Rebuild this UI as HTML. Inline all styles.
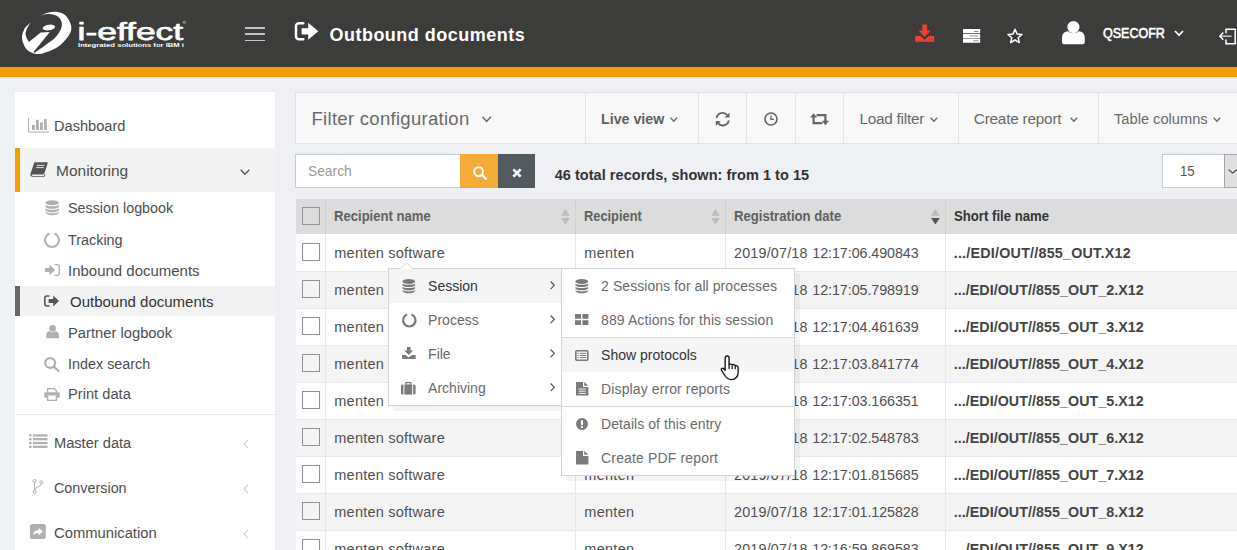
<!DOCTYPE html>
<html lang="en">
<head>
<meta charset="utf-8">
<title>Outbound documents</title>
<style>
*{box-sizing:border-box;margin:0;padding:0}
html,body{width:1237px;height:550px;overflow:hidden}
body{background:#eff0f4;font-family:"Liberation Sans",sans-serif;color:#333;position:relative;font-size:14px}
.abs{position:absolute}
svg{position:absolute;overflow:visible}
.t{position:absolute;white-space:nowrap;line-height:20px;height:20px}
#hdr{left:0;top:0;width:1237px;height:67px;background:#3c3c3b}
#obar{left:0;top:67px;width:1237px;height:10px;background:#f59c00}
#side{left:15px;top:92px;width:260px;height:470px;background:#fff}
#fbar{left:295px;top:92px;width:960px;height:52px;background:#f8f8f9;border:1px solid #e2e3e8}
.vd{position:absolute;top:93px;width:1px;height:50px;background:#e2e3e8}
.th{position:absolute;top:199px;height:35px;background:#dcdcdc}
.row{position:absolute;left:296px;width:960px;height:37px;border-top:1px solid #e6e7ec}
.row.f{border-top:none}
.row.o{background:#fff}.row.e{background:#f4f4f5}
.cd{position:absolute;top:0;width:1px;height:37px;background:#e6e7ec}
.cb{position:absolute;left:6px;top:8px;width:18px;height:18px;border:1px solid #929292}
.menu{position:absolute;background:#fff;border:1px solid #d4d4d4;box-shadow:5px 5px 0 rgba(0,0,0,.045)}
.hl{position:absolute;background:#f5f5f5}
</style>
</head>
<body>
<div id="hdr" class="abs"></div>
<div id="obar" class="abs"></div>

<svg style="left:0;top:0" width="200" height="67" viewBox="0 0 200 67">
  <path d="M40.7 15.5 C41.9 15.0 45.4 13.3 48.0 12.7 C50.6 12.1 53.3 11.4 56.2 11.8 C59.1 12.2 62.8 12.9 65.3 15.3 C67.8 17.7 70.6 22.8 71.2 26.2 C71.8 29.5 71.0 31.9 68.9 35.3 C66.9 38.6 62.8 43.3 58.9 46.2 C55.0 49.1 49.1 51.3 45.3 52.5 C41.5 53.8 39.2 54.4 36.2 53.9 C33.2 53.5 29.4 52.3 27.1 49.8 C24.7 47.3 22.5 42.4 22.1 38.9 C21.6 35.4 22.9 31.7 24.4 28.9 C25.8 26.2 29.7 23.5 30.7 22.4 C30.0 23.5 27.5 27.2 26.6 29.4 C25.8 31.5 25.3 33.2 25.7 35.3 C26.1 37.4 28.4 41.0 28.9 42.1 L40.7 32.5 L49.8 32.1 L33.6 52.0 L34.5 52.9 C36.5 51.5 42.9 47.0 46.2 44.5 C49.5 42.1 52.2 40.5 54.4 38.5 C56.6 36.4 58.1 34.2 59.4 32.1 C60.6 30.0 61.6 27.8 61.8 25.7 C62.0 23.6 61.7 21.1 60.5 19.4 C59.4 17.6 57.1 16.0 54.8 15.1 C52.6 14.2 49.4 13.8 47.1 13.9 C44.7 14.0 41.8 15.2 40.7 15.5 Z" fill="#fff"/>
  <ellipse cx="48.9" cy="27.5" rx="6.3" ry="2.8" transform="rotate(-8 48.9 27.5)" fill="#fff"/>
  <text x="77.6" y="39.7" font-family="Liberation Sans, sans-serif" font-size="24.8" fill="#fff" stroke="#fff" stroke-width="0.75" stroke-linejoin="round" textLength="105.5" lengthAdjust="spacingAndGlyphs">i-effect</text>
  <text x="78" y="46.9" font-family="Liberation Sans, sans-serif" font-weight="bold" font-size="5.2" fill="#fff" textLength="106" lengthAdjust="spacingAndGlyphs">Integrated solutions for IBM i</text>
  <circle cx="184.3" cy="22.3" r="1.1" fill="none" stroke="#fff" stroke-width="0.5"/>
</svg>

<div class="abs" style="left:245px;top:26.8px;width:20px;height:1.9px;background:#c4c4c4"></div>
<div class="abs" style="left:245px;top:33.2px;width:20px;height:1.9px;background:#c4c4c4"></div>
<div class="abs" style="left:245px;top:39.6px;width:20px;height:1.9px;background:#c4c4c4"></div>
<svg style="left:294px;top:21px" width="25" height="21" viewBox="0 0 25 21">
  <path d="M9.3 2.3 H5 A3 3 0 0 0 2 5.3 V15.3 A3 3 0 0 0 5 18.3 H9.3" fill="none" stroke="#fff" stroke-width="2.5" stroke-linecap="round"/>
  <path d="M7.6 7.2 H14.2 V1.8 L24.3 10.3 L14.2 18.8 V13.4 H7.6 Z" fill="#fff"/>
</svg>
<div class="t" style="left:329.4px;top:24.6px;font-size:18px;color:#fff;letter-spacing:0.50px;font-weight:bold;">Outbound documents</div>
<svg style="left:915px;top:24px" width="19.2" height="18" viewBox="0 0 19.2 18">
  <path d="M7.3 0.6 H12.1 V6.5 H15.8 L9.7 13 L3.6 6.5 H7.3 Z" fill="#ee4136"/>
  <path d="M0.2 12 H5.6 L9.7 16 L13.8 12 H19.1 V17.8 H0.2 Z" fill="#ee4136"/>
  <rect x="13.3" y="14.8" width="1.5" height="1.4" fill="#c5342b"/><rect x="16" y="14.8" width="1.5" height="1.4" fill="#c5342b"/>
</svg>
<svg style="left:962.6px;top:28.6px" width="17.2" height="13.8" viewBox="0 0 17.2 13.8">
  <rect x="0" y="0" width="17.2" height="4.3" rx="0.6" fill="#fff"/>
  <rect x="0" y="4.9" width="17.2" height="4.1" rx="0.6" fill="#fff"/>
  <rect x="0" y="9.6" width="17.2" height="4.2" rx="0.6" fill="#fff"/>
  <rect x="11" y="2" width="4.6" height="0.9" fill="#8a8a8a"/><rect x="6.5" y="6.5" width="9" height="0.9" fill="#8a8a8a"/><rect x="10" y="11.3" width="5.6" height="0.9" fill="#8a8a8a"/>
</svg>
<svg style="left:1007px;top:28px" width="16" height="16" viewBox="0 0 16 16">
  <path d="M8 1.3 L10 5.9 L15 6.4 L11.2 9.7 L12.3 14.6 L8 12 L3.7 14.6 L4.8 9.7 L1 6.4 L6 5.9 Z" fill="none" stroke="#fff" stroke-width="1.5" stroke-linejoin="round"/>
</svg>
<svg style="left:1062px;top:20.8px" width="23" height="23.4" viewBox="0 0 23 23.4">
  <circle cx="11.4" cy="6.1" r="6.1" fill="#fff"/>
  <path d="M0 20.4 V17 C0 12.6 2.6 10.6 6 10.3 C8.4 12.8 14.4 12.8 16.8 10.3 C20.2 10.6 22.8 12.6 22.8 17 V20.4 Q22.8 23.3 19.8 23.3 H3 Q0 23.3 0 20.4 Z" fill="#fff"/>
</svg>
<div class="t" style="left:1103.4px;top:23.3px;font-size:14px;color:#fff;letter-spacing:0.00px;transform:scaleX(0.8941);transform-origin:0 0;-webkit-text-stroke:0.55px #fff;">QSECOFR</div>
<svg style="left:1174px;top:30px" width="10" height="7" viewBox="0 0 10 7"><path d="M1 1 L5 5.2 L9 1" fill="none" stroke="#fff" stroke-width="1.7"/></svg>
<svg style="left:1218.5px;top:27.6px" width="18" height="17" viewBox="0 0 18 17">
  <path d="M7 5.2 V1.2 H16.2 V15.8 H7 V11.4" fill="none" stroke="#fff" stroke-width="1.5"/>
  <path d="M1.5 8.2 H12.5" fill="none" stroke="#d0d0d0" stroke-width="1.4"/>
  <path d="M4.3 4.6 L0.9 8.2 L4.3 11.8" fill="none" stroke="#fff" stroke-width="1.5"/>
</svg>
<div id="side" class="abs"></div>
<div class="abs" style="left:15px;top:148px;width:260px;height:44px;background:#f3f3f4"></div>
<div class="abs" style="left:15px;top:148px;width:5px;height:44px;background:#f59c00"></div>
<div class="abs" style="left:15px;top:286px;width:260px;height:30px;background:#f3f3f4"></div>
<div class="abs" style="left:15px;top:286px;width:5px;height:30px;background:#666"></div>
<div class="abs" style="left:15px;top:414px;width:260px;height:1px;background:#e9e9ec"></div>

<div class="t" style="left:54.4px;top:115.6px;font-size:15.5px;color:#4d4d4d;letter-spacing:0.00px;transform:scaleX(0.9429);transform-origin:0 0;">Dashboard</div>
<div class="t" style="left:56.1px;top:160.9px;font-size:15.5px;color:#4d4d4d;letter-spacing:-0.04px;">Monitoring</div>
<div class="t" style="left:68.1px;top:198.4px;font-size:15.5px;color:#4d4d4d;letter-spacing:0.00px;transform:scaleX(0.9249);transform-origin:0 0;">Session logbook</div>
<div class="t" style="left:68.1px;top:229.6px;font-size:15.5px;color:#4d4d4d;letter-spacing:0.00px;transform:scaleX(0.9276);transform-origin:0 0;">Tracking</div>
<div class="t" style="left:68.1px;top:260.6px;font-size:15.5px;color:#4d4d4d;letter-spacing:0.00px;transform:scaleX(0.9665);transform-origin:0 0;">Inbound documents</div>
<div class="t" style="left:70.3px;top:291.9px;font-size:15.5px;color:#333;letter-spacing:0.00px;transform:scaleX(0.9675);transform-origin:0 0;">Outbound documents</div>
<div class="t" style="left:68.1px;top:322.5px;font-size:15.5px;color:#4d4d4d;letter-spacing:0.00px;transform:scaleX(0.9513);transform-origin:0 0;">Partner logbook</div>
<div class="t" style="left:68.1px;top:353.5px;font-size:15.5px;color:#4d4d4d;letter-spacing:0.00px;transform:scaleX(0.9274);transform-origin:0 0;">Index search</div>
<div class="t" style="left:68.1px;top:384.2px;font-size:15.5px;color:#4d4d4d;letter-spacing:0.00px;transform:scaleX(0.9466);transform-origin:0 0;">Print data</div>
<div class="t" style="left:54.4px;top:432.5px;font-size:15.5px;color:#4d4d4d;letter-spacing:0.00px;transform:scaleX(0.9433);transform-origin:0 0;">Master data</div>
<div class="t" style="left:54.4px;top:478.0px;font-size:15.5px;color:#4d4d4d;letter-spacing:0.00px;transform:scaleX(0.9260);transform-origin:0 0;">Conversion</div>
<div class="t" style="left:54.4px;top:522.6px;font-size:15.5px;color:#4d4d4d;letter-spacing:0.00px;transform:scaleX(0.9537);transform-origin:0 0;">Communication</div>
<svg style="left:27.5px;top:117.5px" width="21" height="15" viewBox="0 0 21 15">
 <path d="M0.5 0 V14 H21" fill="none" stroke="#b0b0b0" stroke-width="1"/>
 <rect x="4" y="7" width="2.8" height="5" fill="#b0b0b0"/><rect x="8" y="1.8" width="2.8" height="10.2" fill="#b0b0b0"/><rect x="12" y="4.4" width="2.8" height="7.6" fill="#b0b0b0"/><rect x="16" y="1" width="2.8" height="11" fill="#b0b0b0"/>
</svg>
<svg style="left:29.5px;top:162px" width="18" height="15" viewBox="0 0 18 15">
 <path d="M5.2 0.3 H17.2 Q18 0.3 17.7 1.2 L14.4 11.6 Q14.1 12.4 13.2 12.4 H2.6 Q1.4 12.4 1.6 13.2 Q1.8 13.9 3 13.9 H13.8 L14.6 12.2 L15.5 12.6 L14.6 14.8 H2.4 Q0.2 14.8 0.3 12.6 Q0.3 11.8 0.8 10.8 L4 1.2 Q4.3 0.3 5.2 0.3 Z" fill="#555"/>
 <path d="M6.8 3.4 H14.4 M6.2 5.6 H13.8" stroke="#f3f3f4" stroke-width="0.9"/>
</svg>
<svg style="left:239.5px;top:168.5px" width="10" height="7" viewBox="0 0 10 7"><path d="M0.7 0.8 L5 5.3 L9.3 0.8" fill="none" stroke="#555" stroke-width="1.3"/></svg>
<svg style="left:243px;top:439px" width="6" height="10" viewBox="0 0 6 10"><path d="M5.3 0.6 L1 5 L5.3 9.4" fill="none" stroke="#cfcfcf" stroke-width="1.1"/></svg>
<svg style="left:243px;top:484px" width="6" height="10" viewBox="0 0 6 10"><path d="M5.3 0.6 L1 5 L5.3 9.4" fill="none" stroke="#cfcfcf" stroke-width="1.1"/></svg>
<svg style="left:243px;top:529px" width="6" height="10" viewBox="0 0 6 10"><path d="M5.3 0.6 L1 5 L5.3 9.4" fill="none" stroke="#cfcfcf" stroke-width="1.1"/></svg>
<svg style="left:44.9px;top:200.2px" width="14.4" height="15.6" viewBox="0 0 14 15">
 <ellipse cx="7" cy="2.6" rx="6.6" ry="2.5" fill="#b0b0b0"/>
 <path d="M0.4 4.6 C2 6.6 12 6.6 13.6 4.6 V6.4 C12 9 2 9 0.4 6.4 Z" fill="#b0b0b0"/>
 <path d="M0.4 8 C2 10 12 10 13.6 8 V9.8 C12 12.4 2 12.4 0.4 9.8 Z" fill="#b0b0b0"/>
 <path d="M0.4 11.4 C2 13.4 12 13.4 13.6 11.4 V12.4 C12 15.6 2 15.6 0.4 12.4 Z" fill="#b0b0b0"/>
</svg>
<svg style="left:44px;top:231.5px" width="16" height="16" viewBox="0 0 16 16"><path d="M10.38 1.47 A6.95 6.95 0 1 1 5.62 1.47" fill="none" stroke="#b4b4b4" stroke-width="2.1"/></svg>
<svg style="left:44.8px;top:264.2px" width="15" height="12" viewBox="0 0 15 12">
 <path d="M0 4 H4.5 V0.8 L10 6 L4.5 11.2 V8 H0 Z" fill="#b0b0b0"/>
 <path d="M9.5 0.7 H12.3 A2 2 0 0 1 14.3 2.7 V9.3 A2 2 0 0 1 12.3 11.3 H9.5" fill="none" stroke="#b0b0b0" stroke-width="1.3"/>
</svg>
<svg style="left:44.4px;top:295px" width="15" height="12" viewBox="0 0 15 12">
 <path d="M5.5 1 H3 A2.2 2.2 0 0 0 0.8 3.2 V8.8 A2.2 2.2 0 0 0 3 11 H5.5" fill="none" stroke="#555" stroke-width="1.6"/>
 <path d="M4.6 4 H9.2 V0.6 L15 6 L9.2 11.4 V8 H4.6 Z" fill="#555"/>
</svg>
<svg style="left:45.5px;top:325.2px" width="13.2" height="13.4" viewBox="0 0 13 13.4">
 <circle cx="6.5" cy="3.4" r="3.3" fill="#b0b0b0"/>
 <path d="M0.2 13.2 V9.8 C0.2 7.4 2 6.3 3.6 6.2 C4.8 7.6 8.2 7.6 9.4 6.2 C11 6.3 12.8 7.4 12.8 9.8 V13.2 Z" fill="#b0b0b0"/>
</svg>
<svg style="left:44.3px;top:357.3px" width="16" height="15" viewBox="0 0 16 15">
 <circle cx="6.2" cy="6" r="4.9" fill="none" stroke="#b0b0b0" stroke-width="2.2"/>
 <path d="M9.8 9.6 L14.6 14" stroke="#b0b0b0" stroke-width="2.2" stroke-linecap="round"/>
</svg>
<svg style="left:44.3px;top:388px" width="16" height="13" viewBox="0 0 16 13">
 <path d="M3.6 4.4 V0.7 H10.4 L12.4 2.7 V4.4" fill="none" stroke="#b0b0b0" stroke-width="1.3"/>
 <path d="M1.6 4.2 H14.4 Q15.8 4.2 15.8 5.6 V9.6 H12.6 V7.6 H3.4 V9.6 H0.2 V5.6 Q0.2 4.2 1.6 4.2 Z" fill="#b0b0b0"/>
 <path d="M3.6 8 V12.3 H12.4 V8" fill="none" stroke="#b0b0b0" stroke-width="1.3"/>
</svg>
<svg style="left:29.2px;top:434px" width="18.5" height="14" viewBox="0 0 18.5 14"><rect x="0" y="0.3" width="2.6" height="2.2" fill="#b0b0b0"/><rect x="4" y="0.3" width="14.5" height="2.2" fill="#b0b0b0"/><rect x="0" y="4.1" width="2.6" height="2.2" fill="#b0b0b0"/><rect x="4" y="4.1" width="14.5" height="2.2" fill="#b0b0b0"/><rect x="0" y="7.9" width="2.6" height="2.2" fill="#b0b0b0"/><rect x="4" y="7.9" width="14.5" height="2.2" fill="#b0b0b0"/><rect x="0" y="11.7" width="2.6" height="2.2" fill="#b0b0b0"/><rect x="4" y="11.7" width="14.5" height="2.2" fill="#b0b0b0"/></svg>
<svg style="left:32px;top:479px" width="12" height="15" viewBox="0 0 12 15">
 <circle cx="2.6" cy="2" r="1.5" fill="none" stroke="#b0b0b0" stroke-width="1"/>
 <circle cx="2.6" cy="13" r="1.5" fill="none" stroke="#b0b0b0" stroke-width="1"/>
 <circle cx="9.4" cy="3.2" r="1.5" fill="none" stroke="#b0b0b0" stroke-width="1"/>
 <path d="M2.6 3.5 V11.5 M9.4 4.7 C9.4 8 3 7.5 2.6 11" fill="none" stroke="#b0b0b0" stroke-width="1"/>
</svg>
<svg style="left:30.2px;top:523.7px" width="16" height="15" viewBox="0 0 16 15">
 <rect x="0" y="0" width="15.8" height="15" rx="2.6" fill="#b0b0b0"/>
 <path d="M3.4 11.6 C3.2 8 5.4 6.2 8.6 6.2 V3.8 L12.8 7.6 L8.6 11.4 V9 C6.4 9 4.6 9.6 3.4 11.6 Z" fill="#fff"/>
</svg>
<div id="fbar" class="abs"></div>
<div class="vd" style="left:585px"></div>
<div class="vd" style="left:698px"></div>
<div class="vd" style="left:746px"></div>
<div class="vd" style="left:795px"></div>
<div class="vd" style="left:843px"></div>
<div class="vd" style="left:958px"></div>
<div class="vd" style="left:1098px"></div>
<div class="t" style="left:311.5px;top:108.6px;font-size:18.5px;color:#6a6a6a;letter-spacing:0.29px;">Filter configuration</div>
<div class="t" style="left:601.1px;top:109.1px;font-size:15px;color:#5f5f5f;letter-spacing:0.00px;transform:scaleX(0.9475);transform-origin:0 0;font-weight:bold;">Live view</div>
<div class="t" style="left:859.5px;top:109.1px;font-size:15.3px;color:#6a6a6a;letter-spacing:-0.24px;">Load filter</div>
<div class="t" style="left:973.8px;top:109.1px;font-size:15.3px;color:#6a6a6a;letter-spacing:-0.20px;">Create report</div>
<div class="t" style="left:1114.2px;top:109.1px;font-size:15.3px;color:#6a6a6a;letter-spacing:0.00px;transform:scaleX(0.9581);transform-origin:0 0;">Table columns</div>
<svg style="left:481.7px;top:116.3px" width="9.4" height="6.3" viewBox="0 0 9.4 6.3"><path d="M0.6 0.7 L4.7 5.3999999999999995 L8.8 0.7" fill="none" stroke="#6a6a6a" stroke-width="1.5"/></svg>
<svg style="left:670.3px;top:117px" width="7.6" height="5.2" viewBox="0 0 7.6 5.2"><path d="M0.6 0.7 L3.8 4.3 L7.0 0.7" fill="none" stroke="#6a6a6a" stroke-width="1.3"/></svg>
<svg style="left:930.2px;top:117px" width="7.8" height="5.2" viewBox="0 0 7.8 5.2"><path d="M0.6 0.7 L3.9 4.3 L7.2 0.7" fill="none" stroke="#6a6a6a" stroke-width="1.3"/></svg>
<svg style="left:1070.4px;top:117px" width="7.8" height="5.2" viewBox="0 0 7.8 5.2"><path d="M0.6 0.7 L3.9 4.3 L7.2 0.7" fill="none" stroke="#6a6a6a" stroke-width="1.3"/></svg>
<svg style="left:1213.4px;top:117px" width="7.8" height="5.2" viewBox="0 0 7.8 5.2"><path d="M0.6 0.7 L3.9 4.3 L7.2 0.7" fill="none" stroke="#6a6a6a" stroke-width="1.3"/></svg>
<svg style="left:714.5px;top:111.8px" width="15.4" height="14.4" viewBox="0 0 15.4 14.4">
 <path d="M1.6 6 A6 6 0 0 1 12.2 3.2" fill="none" stroke="#666" stroke-width="1.9"/>
 <path d="M13.8 8.4 A6 6 0 0 1 3.2 11.2" fill="none" stroke="#666" stroke-width="1.9"/>
 <path d="M14.6 0.4 V5.4 H9.6 Z" fill="#666"/>
 <path d="M0.8 14 V9 H5.8 Z" fill="#666"/>
</svg>
<svg style="left:763.6px;top:112px" width="14" height="14" viewBox="0 0 14 14">
 <circle cx="7" cy="7" r="6" fill="none" stroke="#666" stroke-width="1.6"/>
 <path d="M7 3.4 V7.4 H10" fill="none" stroke="#666" stroke-width="1.4"/>
</svg>
<svg style="left:810px;top:113px" width="19" height="12.4" viewBox="0 0 19 12.4">
 <path d="M3.6 4 V10.2 H12.4" fill="none" stroke="#666" stroke-width="2.2"/>
 <path d="M0 4.6 L3.6 0.2 L7.2 4.6 Z" fill="#666"/>
 <path d="M15.4 8.4 V2.2 H6.6" fill="none" stroke="#666" stroke-width="2.2"/>
 <path d="M11.8 7.8 L15.4 12.2 L19 7.8 Z" fill="#666"/>
</svg>
<div class="abs" style="left:295px;top:154px;width:166px;height:34px;background:#fff;border:1px solid #c5cbdc"></div>
<div class="abs" style="left:460px;top:154px;width:38px;height:34px;background:#f5ab35"></div>
<div class="abs" style="left:498px;top:154px;width:37px;height:34px;background:#525a60"></div>
<svg style="left:472.5px;top:166.3px" width="14" height="14" viewBox="0 0 14 14">
 <circle cx="5.6" cy="5.6" r="4.4" fill="none" stroke="#fff" stroke-width="2"/>
 <path d="M8.9 8.9 L12.8 12.8" stroke="#fff" stroke-width="2.3" stroke-linecap="round"/>
</svg>
<svg style="left:511.6px;top:167.6px" width="10" height="10" viewBox="0 0 10 10">
 <path d="M1.4 1.4 L8.6 8.6 M8.6 1.4 L1.4 8.6" stroke="#fff" stroke-width="2.7"/>
</svg>
<div class="t" style="left:307.7px;top:161.3px;font-size:15px;color:#999;letter-spacing:0.00px;transform:scaleX(0.9195);transform-origin:0 0;">Search</div>
<div class="t" style="left:554.7px;top:164.7px;font-size:14.5px;color:#333;letter-spacing:0.04px;font-weight:bold;">46 total records, shown: from 1 to 15</div>
<div class="abs" style="left:1162px;top:154px;width:80px;height:34px;background:#fff;border:1px solid #c5cbdc"></div>
<div class="abs" style="left:1224px;top:154px;width:20px;height:34px;background:#e0e0e0;border:1px solid #a6a6a6"></div>
<svg style="left:1228.4px;top:168.6px" width="9.4" height="5" viewBox="0 0 9.4 5"><path d="M0.6 0.7 L4.7 4.1 L8.8 0.7" fill="none" stroke="#333" stroke-width="1.1"/></svg>
<div class="t" style="left:1179.7px;top:161.3px;font-size:15px;color:#555;letter-spacing:0.00px;transform:scaleX(0.8810);transform-origin:0 0;">15</div>
<div class="th" style="left:296px;width:960px"></div>
<div class="abs" style="left:325px;top:199px;width:1px;height:35px;background:#d0d0d2"></div>
<div class="abs" style="left:575px;top:199px;width:1px;height:35px;background:#d0d0d2"></div>
<div class="abs" style="left:725px;top:199px;width:1px;height:35px;background:#d0d0d2"></div>
<div class="abs" style="left:945px;top:199px;width:1px;height:35px;background:#d0d0d2"></div>
<div class="abs" style="left:302px;top:207px;width:18px;height:18px;border:1px solid #969696"></div>
<div class="t" style="left:334.0px;top:206.3px;font-size:14.3px;color:#606060;letter-spacing:0.00px;transform:scaleX(0.9149);transform-origin:0 0;font-weight:bold;">Recipient name</div>
<div class="t" style="left:583.9px;top:206.3px;font-size:14.3px;color:#606060;letter-spacing:0.00px;transform:scaleX(0.8980);transform-origin:0 0;font-weight:bold;">Recipient</div>
<div class="t" style="left:733.7px;top:206.3px;font-size:14.3px;color:#606060;letter-spacing:0.00px;transform:scaleX(0.9178);transform-origin:0 0;font-weight:bold;">Registration date</div>
<div class="t" style="left:953.8px;top:206.3px;font-size:14.3px;color:#333;letter-spacing:0.00px;transform:scaleX(0.9206);transform-origin:0 0;font-weight:bold;">Short file name</div>
<svg style="left:561.0px;top:209px" width="8.8" height="15.6" viewBox="0 0 8 14" preserveAspectRatio="none"><path d="M0 6 L4 0 L8 6 Z" fill="#bdbdbd"/><path d="M0 8 L4 14 L8 8 Z" fill="#bdbdbd"/></svg>
<svg style="left:711.0px;top:209px" width="8.8" height="15.6" viewBox="0 0 8 14" preserveAspectRatio="none"><path d="M0 6 L4 0 L8 6 Z" fill="#bdbdbd"/><path d="M0 8 L4 14 L8 8 Z" fill="#bdbdbd"/></svg>
<svg style="left:930.8000000000001px;top:209px" width="8.8" height="15.6" viewBox="0 0 8 14" preserveAspectRatio="none"><path d="M0 6 L4 0 L8 6 Z" fill="#bdbdbd"/><path d="M0 8 L4 14 L8 8 Z" fill="#555"/></svg>
<div class="row o f" style="top:234px"><div class="cb" style="top:9px"></div><div class="cd" style="left:29px"></div><div class="cd" style="left:279px"></div><div class="cd" style="left:429px"></div><div class="cd" style="left:649px"></div></div>
<div class="t" style="left:334.3px;top:242.7px;font-size:14.5px;color:#505050;letter-spacing:0.23px;">menten software</div>
<div class="t" style="left:584.3px;top:242.7px;font-size:14.5px;color:#505050;letter-spacing:0.29px;">menten</div>
<div class="t" style="left:734.0px;top:242.7px;font-size:14.3px;color:#505050;letter-spacing:0.21px;">2019/07/18</div>
<div class="t" style="left:812.3px;top:242.7px;font-size:14.3px;color:#505050;letter-spacing:-0.07px;">12:17:06.490843</div>
<div class="t" style="left:953.7px;top:242.7px;font-size:14.3px;color:#444;letter-spacing:0.23px;font-weight:bold;">.../EDI/OUT//855_OUT.X12</div>
<div class="row e" style="top:271px"><div class="cb"></div><div class="cd" style="left:29px"></div><div class="cd" style="left:279px"></div><div class="cd" style="left:429px"></div><div class="cd" style="left:649px"></div></div>
<div class="t" style="left:334.3px;top:279.7px;font-size:14.5px;color:#505050;letter-spacing:0.23px;">menten software</div>
<div class="t" style="left:584.3px;top:279.7px;font-size:14.5px;color:#505050;letter-spacing:0.29px;">menten</div>
<div class="t" style="left:734.0px;top:279.7px;font-size:14.3px;color:#505050;letter-spacing:0.21px;">2019/07/18</div>
<div class="t" style="left:812.3px;top:279.7px;font-size:14.3px;color:#505050;letter-spacing:-0.07px;">12:17:05.798919</div>
<div class="t" style="left:953.7px;top:279.7px;font-size:14.3px;color:#444;letter-spacing:0.04px;font-weight:bold;">.../EDI/OUT//855_OUT_2.X12</div>
<div class="row o" style="top:308px"><div class="cb"></div><div class="cd" style="left:29px"></div><div class="cd" style="left:279px"></div><div class="cd" style="left:429px"></div><div class="cd" style="left:649px"></div></div>
<div class="t" style="left:334.3px;top:316.7px;font-size:14.5px;color:#505050;letter-spacing:0.23px;">menten software</div>
<div class="t" style="left:584.3px;top:316.7px;font-size:14.5px;color:#505050;letter-spacing:0.29px;">menten</div>
<div class="t" style="left:734.0px;top:316.7px;font-size:14.3px;color:#505050;letter-spacing:0.21px;">2019/07/18</div>
<div class="t" style="left:812.3px;top:316.7px;font-size:14.3px;color:#505050;letter-spacing:-0.07px;">12:17:04.461639</div>
<div class="t" style="left:953.7px;top:316.7px;font-size:14.3px;color:#444;letter-spacing:0.04px;font-weight:bold;">.../EDI/OUT//855_OUT_3.X12</div>
<div class="row e" style="top:345px"><div class="cb"></div><div class="cd" style="left:29px"></div><div class="cd" style="left:279px"></div><div class="cd" style="left:429px"></div><div class="cd" style="left:649px"></div></div>
<div class="t" style="left:334.3px;top:353.7px;font-size:14.5px;color:#505050;letter-spacing:0.23px;">menten software</div>
<div class="t" style="left:584.3px;top:353.7px;font-size:14.5px;color:#505050;letter-spacing:0.29px;">menten</div>
<div class="t" style="left:734.0px;top:353.7px;font-size:14.3px;color:#505050;letter-spacing:0.21px;">2019/07/18</div>
<div class="t" style="left:812.3px;top:353.7px;font-size:14.3px;color:#505050;letter-spacing:-0.07px;">12:17:03.841774</div>
<div class="t" style="left:953.7px;top:353.7px;font-size:14.3px;color:#444;letter-spacing:0.04px;font-weight:bold;">.../EDI/OUT//855_OUT_4.X12</div>
<div class="row o" style="top:382px"><div class="cb"></div><div class="cd" style="left:29px"></div><div class="cd" style="left:279px"></div><div class="cd" style="left:429px"></div><div class="cd" style="left:649px"></div></div>
<div class="t" style="left:334.3px;top:390.7px;font-size:14.5px;color:#505050;letter-spacing:0.23px;">menten software</div>
<div class="t" style="left:584.3px;top:390.7px;font-size:14.5px;color:#505050;letter-spacing:0.29px;">menten</div>
<div class="t" style="left:734.0px;top:390.7px;font-size:14.3px;color:#505050;letter-spacing:0.21px;">2019/07/18</div>
<div class="t" style="left:812.3px;top:390.7px;font-size:14.3px;color:#505050;letter-spacing:-0.07px;">12:17:03.166351</div>
<div class="t" style="left:953.7px;top:390.7px;font-size:14.3px;color:#444;letter-spacing:0.04px;font-weight:bold;">.../EDI/OUT//855_OUT_5.X12</div>
<div class="row e" style="top:419px"><div class="cb"></div><div class="cd" style="left:29px"></div><div class="cd" style="left:279px"></div><div class="cd" style="left:429px"></div><div class="cd" style="left:649px"></div></div>
<div class="t" style="left:334.3px;top:427.7px;font-size:14.5px;color:#505050;letter-spacing:0.23px;">menten software</div>
<div class="t" style="left:584.3px;top:427.7px;font-size:14.5px;color:#505050;letter-spacing:0.29px;">menten</div>
<div class="t" style="left:734.0px;top:427.7px;font-size:14.3px;color:#505050;letter-spacing:0.21px;">2019/07/18</div>
<div class="t" style="left:812.3px;top:427.7px;font-size:14.3px;color:#505050;letter-spacing:-0.07px;">12:17:02.548783</div>
<div class="t" style="left:953.7px;top:427.7px;font-size:14.3px;color:#444;letter-spacing:0.04px;font-weight:bold;">.../EDI/OUT//855_OUT_6.X12</div>
<div class="row o" style="top:456px"><div class="cb"></div><div class="cd" style="left:29px"></div><div class="cd" style="left:279px"></div><div class="cd" style="left:429px"></div><div class="cd" style="left:649px"></div></div>
<div class="t" style="left:334.3px;top:464.7px;font-size:14.5px;color:#505050;letter-spacing:0.23px;">menten software</div>
<div class="t" style="left:584.3px;top:464.7px;font-size:14.5px;color:#505050;letter-spacing:0.29px;">menten</div>
<div class="t" style="left:734.0px;top:464.7px;font-size:14.3px;color:#505050;letter-spacing:0.21px;">2019/07/18</div>
<div class="t" style="left:812.3px;top:464.7px;font-size:14.3px;color:#505050;letter-spacing:-0.07px;">12:17:01.815685</div>
<div class="t" style="left:953.7px;top:464.7px;font-size:14.3px;color:#444;letter-spacing:0.04px;font-weight:bold;">.../EDI/OUT//855_OUT_7.X12</div>
<div class="row e" style="top:493px"><div class="cb"></div><div class="cd" style="left:29px"></div><div class="cd" style="left:279px"></div><div class="cd" style="left:429px"></div><div class="cd" style="left:649px"></div></div>
<div class="t" style="left:334.3px;top:501.7px;font-size:14.5px;color:#505050;letter-spacing:0.23px;">menten software</div>
<div class="t" style="left:584.3px;top:501.7px;font-size:14.5px;color:#505050;letter-spacing:0.29px;">menten</div>
<div class="t" style="left:734.0px;top:501.7px;font-size:14.3px;color:#505050;letter-spacing:0.21px;">2019/07/18</div>
<div class="t" style="left:812.3px;top:501.7px;font-size:14.3px;color:#505050;letter-spacing:-0.07px;">12:17:01.125828</div>
<div class="t" style="left:953.7px;top:501.7px;font-size:14.3px;color:#444;letter-spacing:0.04px;font-weight:bold;">.../EDI/OUT//855_OUT_8.X12</div>
<div class="row o" style="top:530px"><div class="cb"></div><div class="cd" style="left:29px"></div><div class="cd" style="left:279px"></div><div class="cd" style="left:429px"></div><div class="cd" style="left:649px"></div></div>
<div class="t" style="left:334.3px;top:538.7px;font-size:14.5px;color:#505050;letter-spacing:0.23px;">menten software</div>
<div class="t" style="left:584.3px;top:538.7px;font-size:14.5px;color:#505050;letter-spacing:0.29px;">menten</div>
<div class="t" style="left:734.0px;top:538.7px;font-size:14.3px;color:#505050;letter-spacing:0.21px;">2019/07/18</div>
<div class="t" style="left:812.3px;top:538.7px;font-size:14.3px;color:#505050;letter-spacing:-0.07px;">12:16:59.869583</div>
<div class="t" style="left:953.7px;top:538.7px;font-size:14.3px;color:#444;letter-spacing:0.04px;font-weight:bold;">.../EDI/OUT//855_OUT_9.X12</div>
<div class="menu" style="left:388px;top:268px;width:175px;height:138px"></div>
<svg style="left:399px;top:262px" width="15" height="7.6" viewBox="0 0 15 7.6"><path d="M0.5 7.6 L7.5 0.8 L14.5 7.6" fill="#fff" stroke="#d4d4d4" stroke-width="1"/></svg>
<div class="hl" style="left:389px;top:269px;width:173px;height:34px"></div>
<div class="menu" style="left:561px;top:268px;width:234px;height:208px"></div>
<div class="hl" style="left:562px;top:338px;width:232px;height:34px"></div>
<div class="abs" style="left:562px;top:337px;width:232px;height:1px;background:#d9d9d9"></div>
<div class="abs" style="left:562px;top:406px;width:232px;height:1px;background:#d9d9d9"></div>

<div class="t" style="left:428.1px;top:276.4px;font-size:14px;color:#333;letter-spacing:0.00px;">Session</div>
<div class="t" style="left:428.1px;top:310.4px;font-size:14px;color:#6b6b6b;letter-spacing:0.00px;">Process</div>
<div class="t" style="left:428.1px;top:344.4px;font-size:14px;color:#6b6b6b;letter-spacing:0.00px;">File</div>
<div class="t" style="left:428.1px;top:378.4px;font-size:14px;color:#6b6b6b;letter-spacing:0.00px;">Archiving</div>
<svg style="left:550px;top:281.2px" width="5" height="8.6" viewBox="0 0 5 8.6"><path d="M0.6 0.5 L4.3 4.3 L0.6 8.1" fill="none" stroke="#555" stroke-width="1.2"/></svg>
<svg style="left:550px;top:315.2px" width="5" height="8.6" viewBox="0 0 5 8.6"><path d="M0.6 0.5 L4.3 4.3 L0.6 8.1" fill="none" stroke="#555" stroke-width="1.2"/></svg>
<svg style="left:550px;top:349.2px" width="5" height="8.6" viewBox="0 0 5 8.6"><path d="M0.6 0.5 L4.3 4.3 L0.6 8.1" fill="none" stroke="#555" stroke-width="1.2"/></svg>
<svg style="left:550px;top:383.2px" width="5" height="8.6" viewBox="0 0 5 8.6"><path d="M0.6 0.5 L4.3 4.3 L0.6 8.1" fill="none" stroke="#555" stroke-width="1.2"/></svg>
<div class="t" style="left:601.1px;top:276.4px;font-size:14px;color:#6b6b6b;letter-spacing:0.06px;">2 Sessions for all processes</div>
<div class="t" style="left:601.1px;top:310.4px;font-size:14px;color:#6b6b6b;letter-spacing:0.09px;">889 Actions for this session</div>
<div class="t" style="left:601.1px;top:345.4px;font-size:14px;color:#333;letter-spacing:0.00px;">Show protocols</div>
<div class="t" style="left:601.1px;top:379.4px;font-size:14px;color:#6b6b6b;letter-spacing:0.11px;">Display error reports</div>
<div class="t" style="left:601.1px;top:414.4px;font-size:14px;color:#6b6b6b;letter-spacing:0.06px;">Details of this entry</div>
<div class="t" style="left:601.1px;top:448.4px;font-size:14px;color:#6b6b6b;letter-spacing:0.15px;">Create PDF report</div>
<svg style="left:402px;top:278.8px" width="13.6" height="14.4" viewBox="0 0 14 15">
 <ellipse cx="7" cy="2.6" rx="6.6" ry="2.5" fill="#7a7a7a"/>
 <path d="M0.4 4.6 C2 6.6 12 6.6 13.6 4.6 V6.4 C12 9 2 9 0.4 6.4 Z" fill="#7a7a7a"/>
 <path d="M0.4 8 C2 10 12 10 13.6 8 V9.8 C12 12.4 2 12.4 0.4 9.8 Z" fill="#7a7a7a"/>
 <path d="M0.4 11.4 C2 13.4 12 13.4 13.6 11.4 V12.4 C12 15.6 2 15.6 0.4 12.4 Z" fill="#7a7a7a"/>
</svg>
<svg style="left:401.8px;top:313px" width="14.6" height="14.6" viewBox="0 0 14.6 14.6"><path d="M9.42 1.47 A6.199999999999999 6.199999999999999 0 1 1 5.18 1.47" fill="none" stroke="#7a7a7a" stroke-width="2.2"/></svg>
<svg style="left:402px;top:347.2px" width="13.6" height="12" viewBox="0 0 13.6 12">
 <path d="M5 0 H8.6 V3.6 H11.2 L6.8 8 L2.4 3.6 H5 Z" fill="#7a7a7a"/>
 <path d="M0 8 H3.6 L6.8 10.4 L10 8 H13.6 V12 H0 Z" fill="#7a7a7a"/>
</svg>
<svg style="left:401.3px;top:382px" width="14.6" height="12.6" viewBox="0 0 14.6 12.6">
 <path d="M4.8 2.6 V0.6 H9.8 V2.6" fill="none" stroke="#7a7a7a" stroke-width="1.2"/>
 <rect x="3.4" y="2.4" width="7.8" height="10.2" fill="#7a7a7a"/>
 <path d="M2.4 2.4 H1.6 Q0 2.4 0 4 V11 Q0 12.6 1.6 12.6 H2.4 Z M12.2 2.4 H13 Q14.6 2.4 14.6 4 V11 Q14.6 12.6 13 12.6 H12.2 Z" fill="#7a7a7a"/>
</svg>
<svg style="left:575px;top:278.8px" width="13.6" height="14.4" viewBox="0 0 14 15">
 <ellipse cx="7" cy="2.6" rx="6.6" ry="2.5" fill="#7a7a7a"/>
 <path d="M0.4 4.6 C2 6.6 12 6.6 13.6 4.6 V6.4 C12 9 2 9 0.4 6.4 Z" fill="#7a7a7a"/>
 <path d="M0.4 8 C2 10 12 10 13.6 8 V9.8 C12 12.4 2 12.4 0.4 9.8 Z" fill="#7a7a7a"/>
 <path d="M0.4 11.4 C2 13.4 12 13.4 13.6 11.4 V12.4 C12 15.6 2 15.6 0.4 12.4 Z" fill="#7a7a7a"/>
</svg>
<svg style="left:575px;top:314.4px" width="13.4" height="11" viewBox="0 0 13.4 11">
 <rect x="0" y="0" width="6" height="4.8" fill="#7a7a7a"/><rect x="7.4" y="0" width="6" height="4.8" fill="#7a7a7a"/>
 <rect x="0" y="6.2" width="6" height="4.8" fill="#7a7a7a"/><rect x="7.4" y="6.2" width="6" height="4.8" fill="#7a7a7a"/>
</svg>
<svg style="left:575px;top:349.5px" width="13.6" height="11" viewBox="0 0 13.6 11">
 <rect x="0.8" y="0.8" width="12" height="9.4" rx="1" fill="none" stroke="#7a7a7a" stroke-width="1.6"/>
 <path d="M2.4 3.4 H3.6 M4.8 3.4 H11.2 M2.4 5.5 H3.6 M4.8 5.5 H11.2 M2.4 7.6 H3.6 M4.8 7.6 H11.2" stroke="#7a7a7a" stroke-width="1"/>
</svg>
<svg style="left:575.6px;top:382px" width="12.4" height="13.6" viewBox="0 0 12.4 13.6">
 <path d="M0 0 H7 V5 H12.4 V13.6 H0 Z" fill="#7a7a7a"/><path d="M8.2 0 L12.4 3.8 H8.2 Z" fill="#7a7a7a"/>
 <path d="M2.6 7 H9.8 M2.6 9.2 H9.8 M2.6 11.4 H9.8" stroke="#fff" stroke-width="0.9"/>
</svg>
<svg style="left:576px;top:418.4px" width="12" height="12" viewBox="0 0 12 12">
 <circle cx="6" cy="6" r="6" fill="#7a7a7a"/>
 <rect x="5" y="2.2" width="2" height="4.8" fill="#fff"/><rect x="5" y="8" width="2" height="1.9" fill="#fff"/>
</svg>
<svg style="left:575.6px;top:451px" width="12.4" height="13.6" viewBox="0 0 12.4 13.6">
 <path d="M0 0 H7 V5 H12.4 V13.6 H0 Z" fill="#7a7a7a"/><path d="M8.2 0 L12.4 3.8 H8.2 Z" fill="#7a7a7a"/>
</svg>
<svg style="left:720.4px;top:355px" width="20.6" height="26" viewBox="0 0 20 26" preserveAspectRatio="none">
 <path d="M6.6 1 C7.8 0.8 8.8 1.6 8.8 2.8 V9.6 C9.4 8.8 11.2 8.8 11.8 10 C12.6 9.2 14.4 9.4 14.8 10.8 C15.8 10.2 17.6 10.8 17.6 12.6 V17.4 C17.6 21.4 15 24.6 11 24.6 C7.6 24.6 6 22.6 4.4 20 L1.4 15.2 C0.6 13.8 2.4 12.6 3.6 13.8 L5 15.4 V2.8 C5 1.8 5.6 1.2 6.6 1 Z" fill="#fff" stroke="#111" stroke-width="1.3" stroke-linejoin="round"/>
 <path d="M8.8 9.6 V14 M11.8 10.4 V14 M14.8 11 V14.2" stroke="#111" stroke-width="1.2"/>
</svg>
</body>
</html>
